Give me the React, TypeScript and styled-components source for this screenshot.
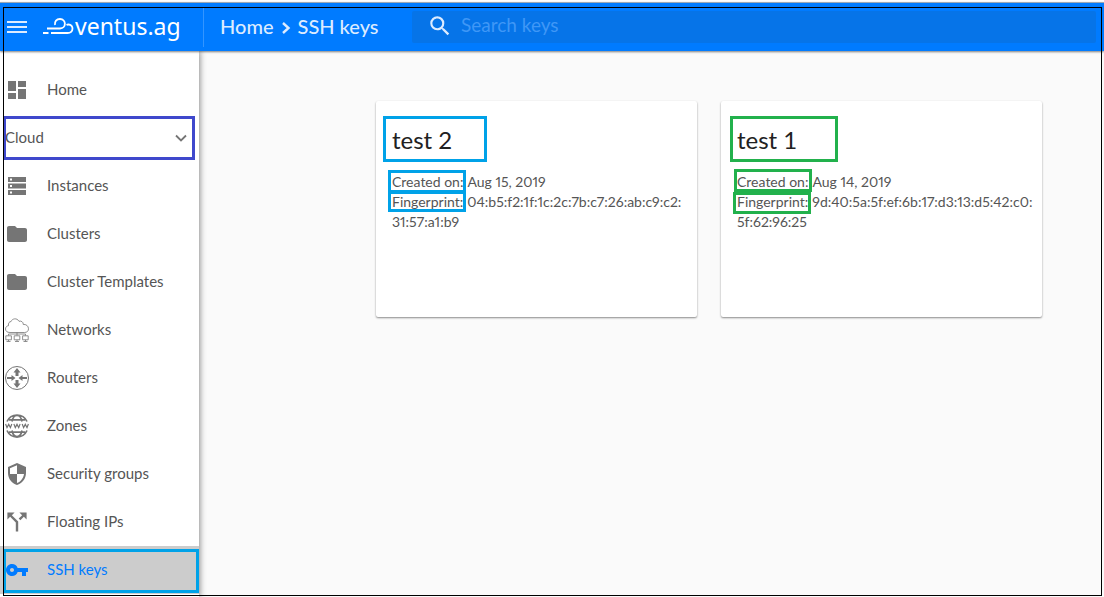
import React from "react";
import styled, { createGlobalStyle } from "styled-components";
import {
  MdCallSplit,
  MdDashboard,
  MdFolder,
  MdSearch,
  MdSecurity,
  MdVpnKey,
} from "react-icons/md";

const GlobalStyle = createGlobalStyle`
  *, *::before, *::after { box-sizing: border-box; }
  body {
    margin: 0;
    background: #fff;
    font-family: Lato, "Liberation Sans", sans-serif;
    color: #555;
  }
`;

const Page = styled.div`
  position: relative;
  min-height: 100vh;
  display: flex;
  flex-direction: column;
  padding-top: 2px;
`;

const Frame = styled.div`
  position: absolute;
  inset: 7px 2px 1px 3px;
  border: 1px solid #000;
  pointer-events: none;
  z-index: 5;
`;

const Header = styled.header`
  position: relative;
  z-index: 2;
  display: flex;
  align-items: center;
  height: 49px;
  padding: 0 8px 0 4px;
  background: #007bff;
  border-top: 1px solid #9aa7b5;
  box-shadow: 0 1px 2px rgba(0, 0, 0, 0.5);
`;

const IconButton = styled.button`
  display: flex;
  padding: 0;
  border: 0;
  background: none;
  color: inherit;
  cursor: pointer;
`;

const MenuButton = styled(IconButton)`
  width: 39px;
  padding-left: 3px;
  color: #dcebff;
`;

const Brand = styled.a`
  display: flex;
  align-items: center;
  width: 160px;
  padding-bottom: 3px;
  color: #fff;
  text-decoration: none;
  font: 400 23px/32px "Noto Sans", sans-serif;
`;

const Crumbs = styled.nav`
  display: flex;
  align-items: center;
  align-self: stretch;
  gap: 6px;
  width: 209px;
  margin: 5px 0 4px;
  padding: 0 0 4px 16px;
  border-left: 1px solid #3395ff;
  color: #dcebff;
  font-size: 20px;
  line-height: 24px;
  font-weight: 500;
  white-space: nowrap;

  a { color: inherit; text-decoration: none; }
  svg { margin-top: 4px; }
`;

const SearchBar = styled.label`
  display: flex;
  align-items: center;
  flex: 1;
  gap: 8px;
  height: 32px;
  padding: 0 0 2px 15px;
  border-radius: 2px;
  background: #0674e8;
  color: #dcebff;
`;

const SearchInput = styled.input`
  flex: 1;
  min-width: 0;
  padding: 0 0 2px;
  border: 0;
  outline: 0;
  background: none;
  color: #fff;
  font: 400 19px/24px Lato, sans-serif;

  &::placeholder { color: #3f97f6; opacity: 1; }
`;

const Body = styled.div`
  flex: 1;
  display: flex;
`;

const Sidebar = styled.nav`
  position: relative;
  z-index: 1;
  flex: 0 0 199px;
  padding-top: 15px;
  background: #fff;
  box-shadow: 1px 0 6px rgba(0, 0, 0, 0.45);
`;

const NavList = styled.ul`
  margin: 0;
  padding: 0;
  list-style: none;
`;

const NavLabel = styled.span`
  padding-bottom: 2px;
`;

const NavLink = styled.a<{ $active?: boolean }>`
  position: relative;
  display: flex;
  align-items: center;
  gap: 18px;
  height: 48px;
  padding-left: 5px;
  font-size: 15px;
  line-height: 20px;
  text-decoration: none;
  color: ${(p) => (p.$active ? "#007bff" : "#555")};
  background: ${(p) => (p.$active ? "#ccc" : "transparent")};

  svg { flex: none; color: ${(p) => (p.$active ? "#007bff" : "#757575")}; }
`;

const GroupButton = styled.button`
  position: relative;
  display: flex;
  align-items: center;
  justify-content: space-between;
  width: 100%;
  height: 48px;
  padding: 0 12px 0 5px;
  border: 0;
  background: none;
  color: #555;
  font: inherit;
  font-size: 15px;
  line-height: 20px;

  svg { color: #757575; }
`;

const Outline = styled.span<{ $color: string; $inset: string; $width?: string }>`
  position: absolute;
  inset: ${(p) => p.$inset};
  width: ${(p) => p.$width ?? "auto"};
  border: 3px solid ${(p) => p.$color};
  pointer-events: none;
`;

const Main = styled.main`
  flex: 1;
  display: grid;
  grid-template-columns: repeat(2, minmax(0, 321px));
  justify-content: end;
  align-content: start;
  gap: 24px;
  padding: 50px 62px 24px 24px;
  background: #fafafa;
`;

const Card = styled.article`
  min-height: 216px;
  padding: 23px 16px 16px;
  border-radius: 2px;
  background: #fff;
  box-shadow: 0 1px 2px rgba(0, 0, 0, 0.45);
`;

const CardTitle = styled.h2`
  position: relative;
  margin: 0 0 16px;
  color: #212121;
  font-size: 24px;
  line-height: 32px;
  font-weight: 400;
`;

const Details = styled.dl`
  margin: 0;
  font-size: 14px;
  line-height: 20px;
  font-variant-numeric: proportional-nums;
  color: #555;
`;

const Detail = styled.div`
  position: relative;

  dt, dd { display: inline; margin: 0; }
  dt { margin-right: 4px; }
`;

const MenuIcon = () => (
  <svg width="20" height="14" viewBox="0 0 20 14" fill="currentColor" aria-hidden="true">
    <path d="M0 1h20v2H0zM0 6h20v2H0zM0 11h20v2H0z" />
  </svg>
);

const WindMark = () => (
  <svg width="32" height="18" viewBox="0 0 32 18" fill="none" stroke="#fff" strokeWidth="1.800" aria-hidden="true">
    <path d="M4 11.500H17C23.500 11.500 23.500 2 17 2C13.500 2 11.500 4.500 12 8" />
    <path d="M0 16H5.500M8 16H24.500C31 16 31 7.500 25.500 7.500C24.500 7.500 24 7.700 23.500 8" />
  </svg>
);

const ServersIcon = () => (
  <svg width="24" height="24" viewBox="0 0 24 24" fill="currentColor" fillRule="evenodd" aria-hidden="true">
    <path d="M3 3h18v5H3zM5 4.500v2h2v-2zM3 9.500h18v5H3zM5 11v2h2v-2zM3 16h18v5H3zM5 17.500v2h2v-2z" />
  </svg>
);

const NetworkIcon = () => (
  <svg width="24" height="24" viewBox="0 0 24 24" fill="none" stroke="currentColor" strokeWidth="0.800" aria-hidden="true">
    <path d="M5 14.500C2 14.500.5 13 .5 11C.5 9 2 7.800 3.500 7.700C3 5 4.500 3.500 6 3.600C7 .5 12-.5 14 3.300C16 2.500 18.500 4 18.300 6.500C21 6 23.500 8 23.500 10.800C23.500 13 22 14.500 19.500 14.500Z" />
    <path d="M12 14.500v3M3.500 17.500v-1.500h17v1.500M.8 17.800h5.600v4H.8zM9.200 17.800h5.600v4H9.200zM17.600 17.800h5.600v4h-5.600zM3.500 21.800v1.500M12 21.800v1.500M20.500 21.800v1.500M1.500 23.500h4M10 23.500h4M18.500 23.500h4" />
  </svg>
);

const RouterIcon = () => (
  <svg width="24" height="24" viewBox="0 0 24 24" fill="currentColor" aria-hidden="true">
    <circle cx="12" cy="12" r="11.500" fill="none" stroke="currentColor" />
    <path d="M12 2l3.500 4.500h-2V10h-3V6.500h-2zM12 22l-3.500-4.500h2V14h3v3.500h2zM10.500 12L6.500 15v-2H2v-2h4.500V9zM13.500 12l4-3v2H22v2h-4.500v2z" />
  </svg>
);

const WwwIcon = () => (
  <svg width="24" height="24" viewBox="0 0 24 24" fill="none" stroke="currentColor" aria-hidden="true">
    <path strokeWidth="1.700" d="M2 7.500C6-1.200 18-1.200 22 7.500M2 16.500C6 25.200 18 25.200 22 16.500M7 7.500C8.500-.5 15.500-.5 17 7.500M7 16.500C8.500 24.500 15.500 24.500 17 16.500M4 5.800h16M4 18.200h16" />
    <path strokeWidth="1.200" d="M.6 10l1.400 3.600L3.700 10.400l1.700 3.200L6.800 10M8.900 10l1.400 3.600L12 10.400l1.700 3.200L15.100 10M17.200 10l1.400 3.600 1.700-3.200 1.700 3.200L23.400 10" />
  </svg>
);

const Chevron = ({ right = false }: { right?: boolean }) => (
  <svg
    width="12"
    height="12"
    viewBox="0 0 12 12"
    fill="none"
    stroke="currentColor"
    strokeWidth={right ? 2.4 : 1.8}
    aria-hidden="true"
  >
    <path d={right ? "M3 1l5.500 5L3 11" : "M1 3.500l5 5 5-5"} />
  </svg>
);

const HomeIcon = () => <MdDashboard size={24} />;
const FolderIcon = () => <MdFolder size={24} />;
const ShieldIcon = () => <MdSecurity size={24} />;
const SplitIcon = () => <MdCallSplit size={24} viewBox="2 2 20 20" />;
const KeyIcon = () => <MdVpnKey size={24} />;

const cloudItems = [
  { label: "Instances", Icon: ServersIcon },
  { label: "Clusters", Icon: FolderIcon },
  { label: "Cluster Templates", Icon: FolderIcon },
  { label: "Networks", Icon: NetworkIcon },
  { label: "Routers", Icon: RouterIcon },
  { label: "Zones", Icon: WwwIcon },
  { label: "Security groups", Icon: ShieldIcon },
  { label: "Floating IPs", Icon: SplitIcon },
  { label: "SSH keys", Icon: KeyIcon, active: true },
];

const keys = [
  {
    name: "test 2",
    created: "Aug 15, 2019",
    fingerprint: ["04:b5:f2:1f:1c:2c:7b:c7:26:ab:c9:c2:", "31:57:a1:b9"],
    color: "#00a2e8",
    titleInset: "-8px auto -6px -9px",
    titleWidth: "104px",
    createdInset: "-2px auto -2px -4px",
    printInset: "-2px auto auto -4px",
  },
  {
    name: "test 1",
    created: "Aug 14, 2019",
    fingerprint: ["9d:40:5a:5f:ef:6b:17:d3:13:d5:42:c0:", "5f:62:96:25"],
    color: "#22b14c",
    titleInset: "-8px auto -6px -7px",
    titleWidth: "108px",
    createdInset: "-3px auto 0 -3px",
    printInset: "0 auto auto -4px",
  },
];

const PrintOutline = styled(Outline)`
  height: 22px;
`;

export default function App() {
  return (
    <Page>
      <GlobalStyle />
      <Header>
        <MenuButton type="button" aria-label="Menu">
          <MenuIcon />
        </MenuButton>
        <Brand href="#">
          <WindMark />
          ventus.ag
        </Brand>
        <Crumbs aria-label="Breadcrumb">
          <a href="#">Home</a>
          <Chevron right />
          <span>SSH keys</span>
        </Crumbs>
        <SearchBar>
          <MdSearch size={26} aria-hidden="true" />
          <SearchInput type="search" placeholder="Search keys" aria-label="Search keys" />
        </SearchBar>
      </Header>
      <Body>
        <Sidebar aria-label="Sections">
          <NavList>
            <li>
              <NavLink href="#">
                <HomeIcon />
                <NavLabel>Home</NavLabel>
              </NavLink>
            </li>
            <li>
              <GroupButton type="button" aria-expanded="true">
                <NavLabel>Cloud</NavLabel>
                <Chevron />
                <Outline $color="#3f48cc" $inset="2px 4px 2px 3px" />
              </GroupButton>
            </li>
            {cloudItems.map(({ label, Icon, active }) => (
              <li key={label}>
                <NavLink href="#" $active={active} aria-current={active ? "page" : undefined}>
                  <Icon />
                  <NavLabel>{label}</NavLabel>
                  {active && <Outline $color="#00a2e8" $inset="3px 0 1px 3px" />}
                </NavLink>
              </li>
            ))}
          </NavList>
        </Sidebar>
        <Main>
          {keys.map((k) => (
            <Card key={k.name}>
              <CardTitle>
                {k.name}
                <Outline $color={k.color} $inset={k.titleInset} $width={k.titleWidth} />
              </CardTitle>
              <Details>
                <Detail>
                  <dt>Created on:</dt>
                  <dd>{k.created}</dd>
                  <Outline $color={k.color} $inset={k.createdInset} $width="78px" />
                </Detail>
                <Detail>
                  <dt>Fingerprint:</dt>
                  <dd>
                    {k.fingerprint[0]}
                    <br />
                    {k.fingerprint[1]}
                  </dd>
                  <PrintOutline $color={k.color} $inset={k.printInset} $width="78px" />
                </Detail>
              </Details>
            </Card>
          ))}
        </Main>
      </Body>
      <Frame />
    </Page>
  );
}
